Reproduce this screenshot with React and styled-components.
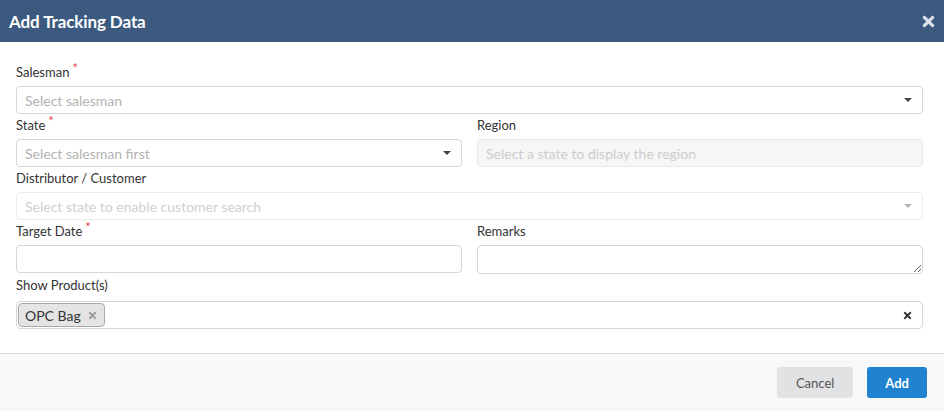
import styled, { createGlobalStyle } from "styled-components";
import { FaTimes } from "react-icons/fa";

const GlobalStyle = createGlobalStyle`
    html, body {
        margin: 0;
        padding: 0;
        background: #fff;
        font-family: Lato, "Noto Sans", "Liberation Sans", sans-serif;
    }
    * {
        box-sizing: border-box;
    }
`;

export default function App() {
    return (
        <>
            <GlobalStyle />
            <Modal>
                <Header>
                    <Title>Add Tracking Data</Title>
                    <CloseButton aria-label="Close">
                        <FaTimes />
                    </CloseButton>
                </Header>
                <Body>
                    <Field>
                        <Label>Salesman<Star>*</Star></Label>
                        <SelectBox>
                            <Placeholder>Select salesman</Placeholder>
                            <Caret />
                        </SelectBox>
                    </Field>
                    <Row>
                        <Field>
                            <Label>State<Star>*</Star></Label>
                            <SelectBox>
                                <Placeholder>Select salesman first</Placeholder>
                                <Caret />
                            </SelectBox>
                        </Field>
                        <Field>
                            <Label>Region</Label>
                            <Input disabled placeholder="Select a state to display the region" />
                        </Field>
                    </Row>
                    <Field>
                        <Label>Distributor / Customer</Label>
                        <SelectBox disabled>
                            <Placeholder disabled>Select state to enable customer search</Placeholder>
                            <Caret disabled />
                        </SelectBox>
                    </Field>
                    <Row>
                        <Field>
                            <Label>Target Date<Star>*</Star></Label>
                            <Input />
                        </Field>
                        <Field>
                            <Label>Remarks</Label>
                            <TextArea rows={1} />
                        </Field>
                    </Row>
                    <Field>
                        <Label>Show Product(s)</Label>
                        <MultiBox>
                            <Chip>
                                OPC Bag
                                <ChipRemove>
                                    <FaTimes />
                                </ChipRemove>
                            </Chip>
                            <ClearAll>
                                <FaTimes />
                            </ClearAll>
                        </MultiBox>
                    </Field>
                </Body>
                <Footer>
                    <Button>Cancel</Button>
                    <Button primary>Add</Button>
                </Footer>
            </Modal>
        </>
    );
}

const Modal = styled.div`
    width: 944px;
    height: 411px;
    display: flex;
    flex-direction: column;
    background: #fff;
`;

const Header = styled.div`
    height: 42px;
    flex-shrink: 0;
    display: flex;
    align-items: center;
    justify-content: space-between;
    padding: 0 7px 0 9px;
    background-color: #3c5a80;
`;

const Title = styled.h4`
    margin: 0;
    color: #fff;
    font-size: 17px;
    font-weight: 700;
    letter-spacing: -0.1px;
`;

const CloseButton = styled.button`
    display: flex;
    align-items: center;
    padding: 0;
    border: none;
    background: none;
    color: #dde2ea;
    font-size: 17px;
    cursor: pointer;
`;

const Body = styled.div`
    flex: 1;
    display: flex;
    flex-direction: column;
    gap: 1px;
    padding: 20px 21px 0 16px;
`;

const Row = styled.div`
    display: grid;
    grid-template-columns: 1fr 1fr;
    column-gap: 15px;
`;

const Field = styled.div`
    display: flex;
    flex-direction: column;
    min-width: 0;
`;

const Label = styled.label`
    display: block;
    height: 20px;
    line-height: 20px;
    margin-bottom: 4px;
    font-size: 13px;
    color: #333;
`;

const Star = styled.span`
    position: relative;
    top: -4px;
    margin-left: 3px;
    font-size: 13px;
    color: #e5484d;
`;

const SelectBox = styled.div`
    height: 28px;
    display: flex;
    align-items: center;
    justify-content: space-between;
    padding: 0 10px 0 8px;
    border: 1px solid ${props => (props.disabled ? "#ececec" : "#d6d6d6")};
    border-radius: 4px;
    background: #fff;
`;

const Placeholder = styled.span`
    font-size: 14px;
    color: ${props => (props.disabled ? "#d0d0d0" : "#b3b3b3")};
    white-space: nowrap;
`;

const Caret = styled.span`
    width: 0;
    height: 0;
    border-left: 4px solid transparent;
    border-right: 4px solid transparent;
    border-top: 4px solid ${props => (props.disabled ? "#b5b5b5" : "#444")};
`;

const Input = styled.input`
    height: 28px;
    width: 100%;
    padding: 0 8px;
    border: 1px solid #d6d6d6;
    border-radius: 4px;
    font-family: inherit;
    font-size: 14px;
    color: #333;
    outline: none;

    &:disabled {
        background: #f6f6f6;
        border-color: #e8e8e8;
    }

    &::placeholder {
        color: #cdcdcd;
    }
`;

const TextArea = styled.textarea`
    height: 29px;
    min-height: 29px;
    width: 100%;
    padding: 4px 8px;
    border: 1px solid #d6d6d6;
    border-radius: 4px;
    font-family: inherit;
    font-size: 14px;
    resize: vertical;
    outline: none;
    display: block;
`;

const MultiBox = styled.div`
    height: 28px;
    margin-top: 2px;
    display: flex;
    align-items: center;
    justify-content: space-between;
    padding: 0 9px 0 1px;
    border: 1px solid #d6d6d6;
    border-radius: 4px;
`;

const Chip = styled.span`
    height: 24px;
    display: inline-flex;
    align-items: center;
    gap: 6px;
    padding: 0 6px 0 6px;
    border: 1px solid #aaa;
    border-radius: 4px;
    background: #e4e4e4;
    font-size: 14px;
    color: #333;
`;

const ChipRemove = styled.span`
    display: flex;
    align-items: center;
    font-size: 11px;
    color: #9a9a9a;
`;

const ClearAll = styled.span`
    display: flex;
    align-items: center;
    font-size: 11px;
    color: #333;
`;

const Footer = styled.div`
    height: 58px;
    flex-shrink: 0;
    display: flex;
    align-items: center;
    justify-content: flex-end;
    gap: 14px;
    padding: 0 17px 0 16px;
    border-top: 1px solid #dcdcdc;
    background: #f7f8fa;
`;

const Button = styled.button`
    height: 31px;
    padding: 0 ${props => (props.primary ? "18px" : "19px")};
    border: none;
    border-radius: 3px;
    font-family: inherit;
    font-size: 13px;
    font-weight: ${props => (props.primary ? 700 : 400)};
    color: ${props => (props.primary ? "#fff" : "#555")};
    background-color: ${props => (props.primary ? "#2182d0" : "#e1e2e4")};
    cursor: pointer;
`;
